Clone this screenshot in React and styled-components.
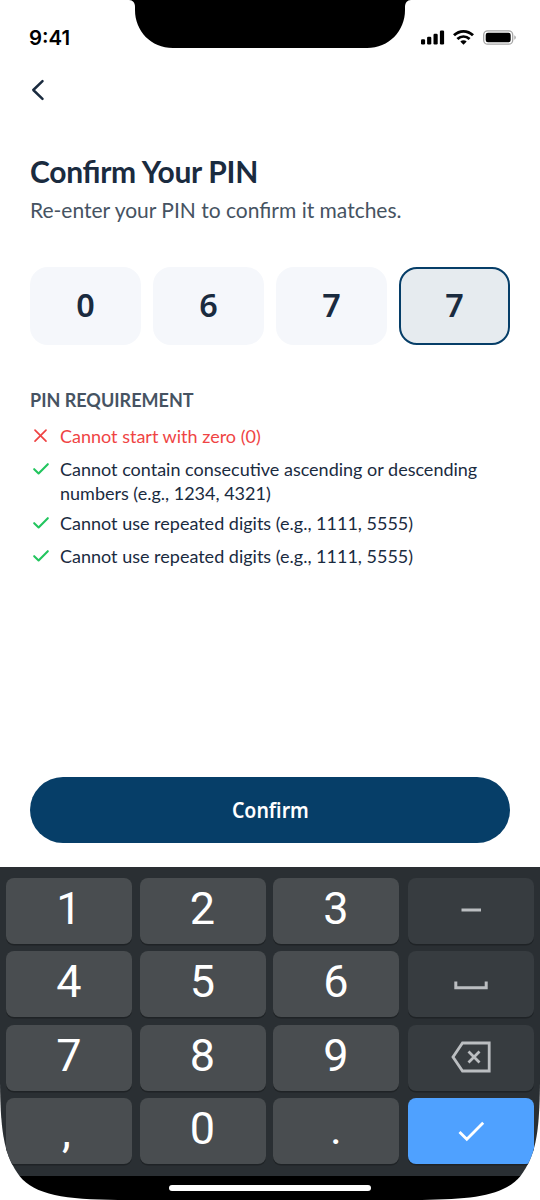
import React from "react";
import styled, { createGlobalStyle } from "styled-components";

const GlobalStyle = createGlobalStyle`
  *, *::before, *::after { box-sizing: border-box; }
  body { margin: 0; background: #fff; }
  button { font: inherit; border: 0; padding: 0; }
`;

const Screen = styled.main`
  width: 540px;
  height: 1200px;
  display: flex;
  flex-direction: column;
  background: #fff;
  color: #1a2b3f;
  font-family: Lato, "Noto Sans", sans-serif;
  clip-path: path("M0 0H540V1083C539.4 1137 535 1156 520.5 1176C505 1195 475 1199.5 422 1200H118C65 1199.5 35 1195 19.5 1176C5 1156 0.6 1137 0 1083Z");
`;

const StatusBar = styled.header`
  height: 75px;
  display: flex;
  justify-content: space-between;
  padding: 0 23px 0 29px;
`;

const Time = styled.time`
  width: 94px;
  padding-top: 25px;
  font: 600 20.4px/25px Inter, sans-serif;
  color: #000;
`;

const Notch = styled.svg`
  width: 282px;
  height: 48px;
`;

const StatusIcons = styled.svg`
  width: 100px;
  height: 20px;
  margin: 28px 0 0;
`;

const BackButton = styled.button`
  width: 30px;
  height: 30px;
  margin-left: 24px;
  background: none;
  svg { display: block; }
`;

const Content = styled.section`
  flex: 1;
  display: flex;
  flex-direction: column;
  padding: 48px 30px 24px;
`;

const Title = styled.h1`
  margin: 0;
  font-size: 30px;
  font-weight: 700;
  line-height: 36px;
  letter-spacing: -0.3px;
  font-feature-settings: "liga" 1;
`;

const Subtitle = styled.p`
  margin: 6px 0 0;
  font-size: 21px;
  line-height: 30px;
  color: #465362;
`;

const PinRow = styled.div`
  display: grid;
  grid-template-columns: repeat(4, 1fr);
  gap: 12px;
  margin-top: 42px;
`;

const PinBox = styled.div`
  height: 78px;
  display: flex;
  align-items: center;
  justify-content: center;
  padding-bottom: 2px;
  border-radius: 18px;
  border: 2px solid ${(p) => (p.$active ? "#063e68" : "#f5f7fb")};
  background: ${(p) => (p.$active ? "#e6ebef" : "#f5f7fb")};
  font: 600 33px/36px "Noto Sans", sans-serif;
`;

const Condensed = styled.span`
  display: inline-block;
  transform: scaleX(${(p) => p.$ratio});
`;

const RequirementHeading = styled.h2`
  margin: 43px 0 0;
  font-size: 18px;
  font-weight: 700;
  line-height: 24px;
  color: #465362;
`;

const Requirements = styled.ul`
  list-style: none;
  margin: 12px 0 0;
  padding: 0;
`;

const Requirement = styled.li`
  display: flex;
  gap: 9px;
  margin-bottom: ${(p) => (p.$tight ? 6 : 9)}px;
  font-size: 18px;
  line-height: 24px;
  color: ${(p) => (p.$failed ? "#ef4444" : "#1a2b3f")};
  svg { flex: none; margin-top: 1px; }
`;

const ConfirmButton = styled.button`
  height: 66px;
  margin-top: auto;
  border-radius: 33px;
  background: #063e68;
  color: #fff;
  font: 600 21px/30px "Noto Sans", sans-serif;
`;

const Keyboard = styled.section`
  height: 309px;
  display: grid;
  grid-template-columns: 126px 126px 126px 126px;
  grid-template-rows: repeat(4, 66px);
  column-gap: 7.5px;
  row-gap: 7.5px;
  padding: 10.5px 6px 0;
  background: #2a2f33;
`;

const keyColors = { digit: "#494d50", action: "#373c40", enter: "#4fa1ff" };

const Key = styled.button`
  display: flex;
  align-items: center;
  justify-content: center;
  margin-left: ${(p) => (p.$kind === "digit" ? 0 : 1.5)}px;
  margin-right: ${(p) => (p.$kind === "digit" ? 0 : -1.5)}px;
  padding-bottom: ${(p) => (p.$kind === "digit" ? 3.5 : 1)}px;
  border-radius: 8px;
  background: ${(p) => keyColors[p.$kind]};
  box-shadow: 0 1.5px 0 #1f2326;
  color: #fff;
  font: 400 45px/54px Roboto, sans-serif;
`;

const Comma = styled.span`
  padding: 6px 5px 0 0;
`;

const HomeArea = styled.footer`
  height: 24px;
  display: flex;
  justify-content: center;
  padding-top: 9px;
  background: #000;
`;

const HomeBar = styled.div`
  width: 202px;
  height: 6px;
  border-radius: 3px;
  background: #fff;
`;

const requirements = [
  { text: "Cannot start with zero (0)", failed: true },
  { text: "Cannot contain consecutive ascending or descending numbers (e.g., 1234, 4321)", tight: true },
  { text: "Cannot use repeated digits (e.g., 1111, 5555)" },
  { text: "Cannot use repeated digits (e.g., 1111, 5555)" },
];

const CheckIcon = () => (
  <svg width="21" height="21" fill="none" stroke="#22c55e" strokeWidth="2.1" strokeLinecap="round" strokeLinejoin="round">
    <path d="M4.2 11.2L8.6 15.4L17.8 6.2" />
  </svg>
);

const CrossIcon = () => (
  <svg width="21" height="21" fill="none" stroke="#ef4444" strokeWidth="1.7" strokeLinecap="round">
    <path d="M5 5.2L16 16.2M16 5.2L5 16.2" />
  </svg>
);

const DashIcon = () => (
  <svg width="20" height="66"><path d="M0.5 33H20" stroke="#bbbec1" strokeWidth="3" /></svg>
);

const SpaceIcon = () => (
  <svg width="34" height="66" fill="none" stroke="#bbbec1" strokeWidth="3"><path d="M1.8 30.5V36.8H32.2V30.5" /></svg>
);

const BackspaceIcon = () => (
  <svg width="40" height="32" fill="none" stroke="#bbbec1" strokeWidth="2.8">
    <path d="M11.5 2H38.2V30H11.5L2 16Z" />
    <path d="M17.5 10.5L28.5 21.5M28.5 10.5L17.5 21.5" />
  </svg>
);

const EnterIcon = () => (
  <svg width="27" height="22" fill="none" stroke="#fff" strokeWidth="2.8"><path d="M1.5 12L8.8 19.3L25.2 2.7" /></svg>
);

const keys = [
  "1", "2", "3", { kind: "action", label: "Dash", Icon: DashIcon },
  "4", "5", "6", { kind: "action", label: "Space", Icon: SpaceIcon },
  "7", "8", "9", { kind: "action", label: "Backspace", Icon: BackspaceIcon },
  ",", "0", ".", { kind: "enter", label: "Enter", Icon: EnterIcon },
];

export default function App() {
  return (
    <>
      <GlobalStyle />
      <Screen>
        <StatusBar>
          <Time>9:41</Time>
          <Notch viewBox="0 0 282 48">
            <path d="M0 0C4 0 6 3 6 7V10C6 31 22 48 44 48H238C260 48 276 31 276 10V7C276 3 278 0 282 0Z" />
          </Notch>
          <StatusIcons viewBox="0 0 100 20">
            <rect x="4" y="11.3" width="4.1" height="5.2" rx="1.2" />
            <rect x="10.1" y="8.7" width="4.2" height="7.8" rx="1.2" />
            <rect x="16.5" y="5.7" width="4.2" height="10.8" rx="1.2" />
            <rect x="22.9" y="2.5" width="4.2" height="14" rx="1.2" />
            <g fill="none" stroke="#000" strokeWidth="2.9">
              <path d="M37 7.3C42.6 2.1 50.4 2.1 56 7.3" />
              <path d="M40.4 11C44 7.8 49 7.8 52.6 11" />
            </g>
            <path d="M43.3 13.6C45.2 11.9 47.8 11.9 49.7 13.6L46.5 16.7Z" />
            <rect x="66.7" y="2.8" width="29" height="13.4" rx="4" fill="none" stroke="#a6a6a6" strokeWidth="1.3" />
            <rect x="68.7" y="4.7" width="25" height="9.6" rx="2.2" />
            <path d="M97.3 7.3C99.4 8.2 99.4 10.8 97.3 11.7Z" fill="#a6a6a6" />
          </StatusIcons>
        </StatusBar>
        <BackButton aria-label="Back">
          <svg width="30" height="30" fill="none" stroke="#1a2b3f" strokeWidth="2.5" strokeLinecap="round" strokeLinejoin="round">
            <path d="M18.5 6.2L9.3 15L18.5 23.8" />
          </svg>
        </BackButton>
        <Content>
          <Title>Confirm Your PIN</Title>
          <Subtitle>Re-enter your PIN to confirm it matches.</Subtitle>
          <PinRow>
            {["0", "6", "7", "7"].map((digit, i) => (
              <PinBox key={i} $active={i === 3}><Condensed $ratio={0.98}>{digit}</Condensed></PinBox>
            ))}
          </PinRow>
          <RequirementHeading>PIN REQUIREMENT</RequirementHeading>
          <Requirements>
            {requirements.map((item, i) => (
              <Requirement key={i} $failed={item.failed} $tight={item.tight}>
                {item.failed ? <CrossIcon /> : <CheckIcon />}
                <span>{item.text}</span>
              </Requirement>
            ))}
          </Requirements>
          <ConfirmButton><Condensed $ratio={0.93}>Confirm</Condensed></ConfirmButton>
        </Content>
        <Keyboard>
          {keys.map((key, i) =>
            typeof key === "string" ? (
              <Key key={i} $kind="digit">{key === "," ? <Comma>,</Comma> : key}</Key>
            ) : (
              <Key key={i} $kind={key.kind} aria-label={key.label}><key.Icon /></Key>
            )
          )}
        </Keyboard>
        <HomeArea><HomeBar /></HomeArea>
      </Screen>
    </>
  );
}
